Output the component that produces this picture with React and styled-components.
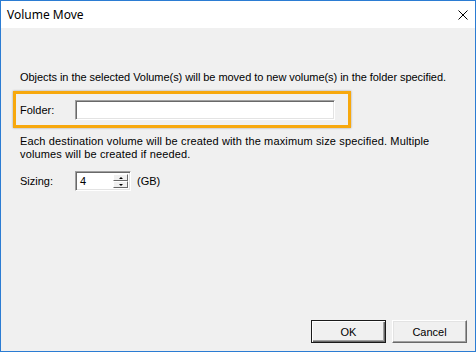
import React, {useState} from "react";
import styled, {createGlobalStyle} from "styled-components";

const GlobalStyle = createGlobalStyle`
  html, body {
    margin: 0;
    padding: 0;
    background: #f0f0f0;
  }
`;

const Window = styled.div`
  width: 476px;
  height: 352px;
  box-sizing: border-box;
  border: 1px solid #2b7cd3;
  display: flex;
  flex-direction: column;
  background: #f0f0f0;
  font-family: "Liberation Sans", Arial, sans-serif;
  font-size: 11px;
  color: #000;
`;

const TitleBar = styled.div`
  height: 27px;
  flex: none;
  background: #ffffff;
  display: flex;
  align-items: center;
  justify-content: space-between;
  padding: 0 6px 0 6px;
  font-family: "Noto Sans", "Open Sans", sans-serif;
  font-size: 12px;
`;

const CloseIcon = styled.svg`
  width: 10px;
  height: 10px;
  margin-right: 1px;
`;

const Body = styled.div`
  flex: 1;
  display: flex;
  flex-direction: column;
  padding: 43px 8px 8px 19px;
`;

const Text = styled.p`
  margin: 0;
  line-height: 13px;
  letter-spacing: ${p => p.$wide ? "0.14px" : "-0.05px"};
`;

const Highlight = styled.div`
  margin: 7px 0 0 -7px;
  width: 338px;
  height: 37px;
  box-sizing: border-box;
  border: 3px solid #f7a80d;
  box-shadow: 0 0 2px rgba(0, 0, 0, 0.35);
  display: flex;
  align-items: center;
  padding: 0 0 0 4px;
`;

const Label = styled.span`
  width: ${p => p.$w}px;
  flex: none;
`;

const Sunken = styled.div`
  box-sizing: border-box;
  height: 20px;
  background: #fff;
  border-style: solid;
  border-width: 1px;
  border-color: #a0a0a0 #ffffff #ffffff #a0a0a0;
  box-shadow: inset 1px 1px 0 #696969, inset -1px -1px 0 #e3e3e3;
`;

const FolderInput = styled(Sunken)`
  width: 260px;
`;

const Description = styled.div`
  margin-top: 7px;
`;

const SizingRow = styled.div`
  display: flex;
  align-items: center;
  margin-top: 10px;
`;

const Spinner = styled(Sunken)`
  width: 56px;
  display: flex;
  padding: 2px 2px 2px 4px;
`;

const SpinValue = styled.span`
  flex: 1;
  line-height: 14px;
`;

const SpinButtons = styled.div`
  width: 15px;
  display: flex;
  flex-direction: column;
`;

const SpinButton = styled.div`
  flex: 1;
  box-sizing: border-box;
  background: #f0f0f0;
  border-style: solid;
  border-width: 1px;
  border-color: #ffffff #696969 #696969 #ffffff;
  display: flex;
  align-items: center;
  justify-content: center;
`;

const Arrow = styled.span`
  width: 0;
  height: 0;
  border-left: 2px solid transparent;
  border-right: 2px solid transparent;
  ${p => p.$up ? "border-bottom: 2px solid #000;" : "border-top: 2px solid #000;"}
`;

const Unit = styled.span`
  margin-left: 6px;
`;

const Footer = styled.div`
  margin-top: auto;
  display: flex;
  justify-content: flex-end;
  gap: 6px;
`;

const Button = styled.button`
  width: 75px;
  height: 23px;
  box-sizing: border-box;
  font-family: inherit;
  font-size: 11px;
  color: #000;
  background: #f0f0f0;
  padding: 0;
  border-style: solid;
  border-width: 1px;
  border-color: ${p => p.$default ? "#1a1a1a" : "#ffffff #696969 #696969 #ffffff"};
  box-shadow: ${p => p.$default
    ? "inset 1px 1px 0 #ffffff, inset -1px -1px 0 #696969, inset -2px -2px 0 #a0a0a0"
    : "inset -1px -1px 0 #a0a0a0, inset 1px 1px 0 #e3e3e3"};
`;

function App() {
    const [size] = useState(4);

    return (
        <>
            <GlobalStyle/>
            <Window>
                <TitleBar>
                    <span>Volume Move</span>
                    <CloseIcon viewBox="0 0 10 10">
                        <path d="M0.5 0.5 L9.5 9.5 M9.5 0.5 L0.5 9.5" stroke="#000" strokeWidth="1" fill="none"/>
                    </CloseIcon>
                </TitleBar>
                <Body>
                    <Text>Objects in the selected Volume(s) will be moved to new volume(s) in the folder specified.</Text>
                    <Highlight>
                        <Label $w={55}>Folder:</Label>
                        <FolderInput/>
                    </Highlight>
                    <Description>
                        <Text $wide>Each destination volume will be created with the maximum size specified. Multiple</Text>
                        <Text $wide>volumes will be created if needed.</Text>
                    </Description>
                    <SizingRow>
                        <Label $w={55}>Sizing:</Label>
                        <Spinner>
                            <SpinValue>{size}</SpinValue>
                            <SpinButtons>
                                <SpinButton><Arrow $up/></SpinButton>
                                <SpinButton><Arrow/></SpinButton>
                            </SpinButtons>
                        </Spinner>
                        <Unit>(GB)</Unit>
                    </SizingRow>
                    <Footer>
                        <Button $default>OK</Button>
                        <Button>Cancel</Button>
                    </Footer>
                </Body>
            </Window>
        </>
    );
}

export default App;
